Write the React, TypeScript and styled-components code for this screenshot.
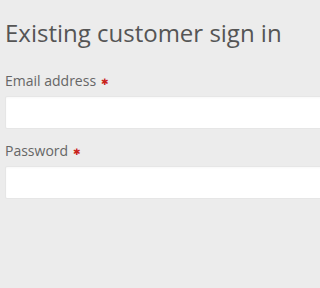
import React from "react";
import styled, { createGlobalStyle } from "styled-components";

const GlobalStyle = createGlobalStyle`
  html, body {
    margin: 0;
    padding: 0;
    background: #ececec;
    overflow: hidden;
  }
  body {
    font-family: "Open Sans", "Liberation Sans", sans-serif;
  }
`;

const Page = styled.div`
  width: 100vw;
  height: 100vh;
  overflow: hidden;
  box-sizing: border-box;
  padding: 14px 0 0 5px;
`;

const Title = styled.h1`
  margin: 0 0 19px;
  font-size: 24px;
  font-weight: 400;
  line-height: 38px;
  color: #555;
  white-space: nowrap;
`;

const Field = styled.div`
  display: flex;
  flex-direction: column;
  margin-bottom: 12px;
`;

const Label = styled.label`
  display: flex;
  align-items: center;
  gap: 5px;
  font-size: 14px;
  line-height: 20px;
  color: #666;
  margin-bottom: 5px;
`;

const Required = styled.span`
  color: #c9221a;
  font-family: "DejaVu Sans", sans-serif;
  font-size: 9px;
  line-height: 1;
  margin-top: 2px;
`;

const Input = styled.input`
  box-sizing: border-box;
  width: calc(100% + 10px);
  height: 33px;
  border: 1px solid #e6e6e6;
  border-radius: 2px;
  background: #fff;
  box-shadow: inset 0 1px 2px rgba(0, 0, 0, 0.03);
  outline: none;
`;

const App: React.FC = () => (
  <Page>
    <GlobalStyle />
    <Title>Existing customer sign in</Title>
    <Field>
      <Label>
        Email address <Required>✱</Required>
      </Label>
      <Input type="email" />
    </Field>
    <Field>
      <Label>
        Password <Required>✱</Required>
      </Label>
      <Input type="password" />
    </Field>
  </Page>
);

export default App;
